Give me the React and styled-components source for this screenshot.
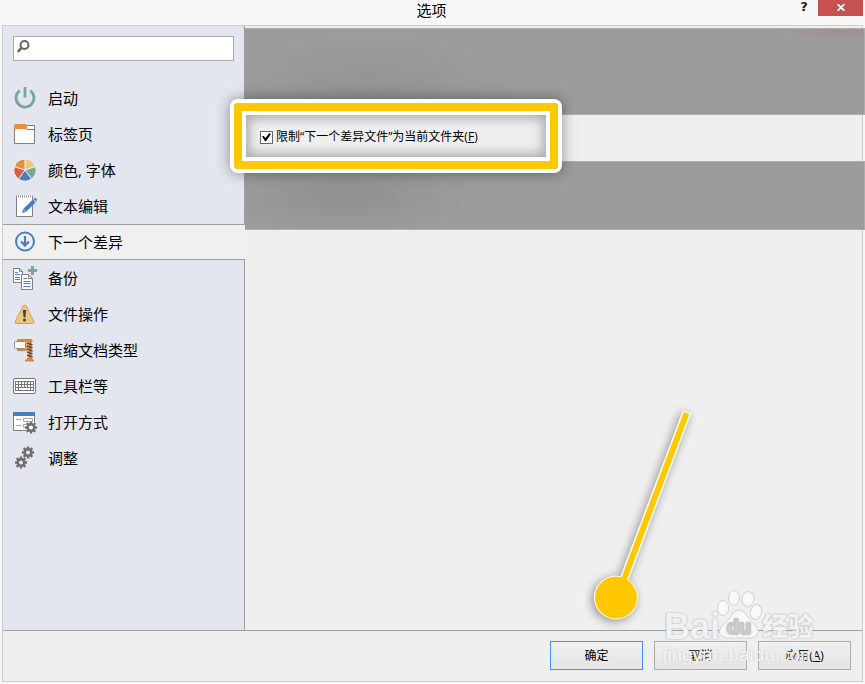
import React, { useState } from 'react';
import styled, { createGlobalStyle } from 'styled-components';

const GlobalStyle = createGlobalStyle`
  * {
    box-sizing: border-box;
  }
  body {
    margin: 0;
    background: #f7f7f7;
    color: #000;
    font-family: "Open Sans", "Noto Sans CJK SC", sans-serif;
    font-size: 15px;
    overflow-x: hidden;
  }
`;

const Dialog = styled.div`
  position: relative;
  display: flex;
  flex-direction: column;
  min-height: 100vh;
`;

const TitleBar = styled.header`
  display: grid;
  grid-template-columns: 1fr auto 1fr;
  height: 25px;
  padding-right: 2px;
`;

const Title = styled.h1`
  grid-column: 2;
  margin: 0;
  font-size: 15px;
  font-weight: 400;
  line-height: 20px;
`;

const WindowButtons = styled.div`
  display: flex;
  justify-content: flex-end;
  align-items: flex-start;
`;

const HelpButton = styled.button`
  width: 28px;
  height: 14px;
  padding: 0;
  border: 0;
  background: none;
  color: #1e1e1e;
  font: bold 13px/14px "DejaVu Sans", sans-serif;
`;

const CloseButton = styled.button`
  display: flex;
  align-items: center;
  justify-content: center;
  width: 45px;
  height: 16px;
  padding: 0 0 2px;
  border: 0;
  background: #c75050;
`;

const Frame = styled.div`
  flex: 1;
  display: flex;
  flex-direction: column;
  margin: 0 2px 2px;
  border: 1px solid #cdcdcd;
  background: #efefef;
`;

const Body = styled.div`
  flex: 1;
  display: flex;
`;

const Sidebar = styled.aside`
  display: flex;
  flex-direction: column;
  width: 242px;
`;

const SearchArea = styled.div`
  height: 54px;
  padding: 10px 10px 0;
  border-right: 1px solid #9e9e9e;
  background: #e3e6ee;
`;

const SearchField = styled.label`
  display: flex;
  height: 25px;
  padding: 3px;
  border: 1px solid #abadb3;
  background: #fff;
`;

const SearchInput = styled.input`
  flex: 1;
  min-width: 0;
  padding: 0 4px;
  border: 0;
  outline: 0;
  background: none;
  font: inherit;
  font-size: 12px;
`;

const Item = styled.button`
  display: flex;
  align-items: center;
  gap: 11px;
  height: 36px;
  padding: 0 10px;
  border: solid #9e9e9e;
  border-width: ${p => (p.$active ? '1px 0' : '0 1px 0 0')};
  background: ${p => (p.$active ? '#f0f0f0' : '#e3e6ee')};
  color: #000;
  font: inherit;
  line-height: 20px;
  text-align: left;
`;

const SidebarRest = styled.div`
  flex: 1;
  border-right: 1px solid #9e9e9e;
  background: #e3e6ee;
`;

const Content = styled.main`
  flex: 1;
  min-width: 0;
  padding-top: 2px;
`;

// greyed out area, runs over the frame up to the window edge
const Masked = styled.div`
  height: ${p => p.$height}px;
  margin-right: -3px;
  border: solid #adadad;
  border-width: 1px 1px 1px 0;
  background: ${p => p.$smudge} #9c9c9c;
`;

const OptionRow = styled.div`
  position: relative;
  display: flex;
  align-items: center;
  height: 46px;
  padding: 0 15px 2px;
`;

const Option = styled.label`
  display: flex;
  align-items: center;
  gap: 3px;
  font-size: 12px;
  line-height: 16px;
  white-space: nowrap;
`;

const CheckBox = styled.input`
  appearance: none;
  display: grid;
  width: 13px;
  height: 13px;
  margin: 0;
  border: 1px solid #666;
  background: #fff;

  &:checked::before {
    content: "";
    margin: 1px;
    background: #000;
    clip-path: polygon(0 42%, 20% 38%, 38% 62%, 82% 6%, 100% 16%, 44% 96%, 34% 96%);
  }
`;

const Highlight = styled.div`
  position: absolute;
  left: -11px;
  top: -12px;
  width: 324px;
  height: 66px;
  border: 8px solid #ffc800;
  border-radius: 4px;
  box-shadow:
    0 0 0 4px #fff,
    0 0 14px 5px rgba(0, 0, 0, 0.35),
    inset 0 0 0 4px #fff,
    inset 0 0 12px 7px rgba(0, 0, 0, 0.3);
  pointer-events: none;
`;

const Footer = styled.footer`
  display: flex;
  justify-content: flex-end;
  gap: 11px;
  height: 51px;
  padding: 10px 11px;
  border-top: 1px solid #9e9e9e;
`;

const PushButton = styled.button`
  width: 93px;
  height: 29px;
  padding: 0;
  border: 1px solid ${p => (p.$default ? '#3399ff' : '#acacac')};
  background: linear-gradient(#f0f0f0, #e4e4e4);
  color: #000;
  font: inherit;
  font-size: 12px;
  line-height: 16px;
`;

const Pin = styled.svg`
  position: absolute;
  right: 165px;
  bottom: 54px;
  pointer-events: none;
  filter: drop-shadow(-2px 2px 5px rgba(0, 0, 0, 0.4));
`;

const Watermark = styled.div`
  position: absolute;
  right: 46px;
  bottom: 19px;
  width: 156px;
  color: rgba(250, 250, 250, 0.9);
  text-shadow: 0 0 2px #b4b4b4, 0 0 1px #b4b4b4;
  pointer-events: none;
`;

const Brand = styled.div`
  display: flex;
  align-items: flex-end;
  padding-left: 1px;
  font: bold 36px/36px "Liberation Sans", sans-serif;
`;

const Paw = styled.svg`
  margin: 0 0 6px -4px;
`;

const BrandCjk = styled.span`
  font: 900 26px/40px "Noto Sans CJK SC", sans-serif;
`;

const Site = styled.div`
  font: 19px/20px "Liberation Sans", sans-serif;
  text-shadow: 0 0 2px #c4c4c4;
`;

const Icon = ({ children }) => (
  <svg width="24" height="24" viewBox="0 0 24 24" fill="none" aria-hidden="true">
    {children}
  </svg>
);

// one cog: eight teeth around a ring
const Cog = ({ x, y }) => (
  <g transform={`translate(${x} ${y})`} stroke="#6e6e6e">
    <circle r="3.3" strokeWidth="2.5" />
    <path
      d="M0-3.6V-6M0 3.6V6M-3.6 0H-6M3.6 0H6M-2.6-2.6L-4.3-4.3M2.6 2.6L4.3 4.3M-2.6 2.6L-4.3 4.3M2.6-2.6L4.3-4.3"
      strokeWidth="2.4"
    />
  </g>
);

const PowerIcon = () => (
  <Icon>
    <path d="M6.8 4.7a9 9 0 1 0 10.4 0M12 1v10.5" stroke="#78a898" strokeWidth="2.8" />
  </Icon>
);

const TabsIcon = () => (
  <Icon>
    <path d="M1.5 6.5V21.5H21.5V3.5H13.5V6.5Z" fill="#fff" stroke="#808080" />
    <path d="M13.5 7.5H21" stroke="#808080" />
    <path d="M1 7V3.5Q1 2 2.5 2H12Q14 2 14 4V7Z" fill="#e88d45" />
  </Icon>
);

const PieIcon = () => (
  <Icon>
    <g stroke="#f2f2f4" strokeWidth="0.9">
      <path d="M12 12V1A11 11 0 0 1 22.46 8.6Z" fill="#eec67c" />
      <path d="M12 12L22.46 8.6A11 11 0 0 1 18.47 20.9Z" fill="#78a898" />
      <path d="M12 12L18.47 20.9A11 11 0 0 1 5.53 20.9Z" fill="#4a80ba" />
      <path d="M12 12L5.53 20.9A11 11 0 0 1 1.54 8.6Z" fill="#d65f42" />
      <path d="M12 12L1.54 8.6A11 11 0 0 1 12 1Z" fill="#e88d45" />
    </g>
  </Icon>
);

const NotepadIcon = () => (
  <Icon>
    <path d="M3.5 3V22.5H19.5V3" fill="#fff" stroke="#808080" />
    <path d="M4 3H19" stroke="#fff" strokeWidth="3" />
    <path d="M3.5 4V1.5M5.500 3.500V1.500M7.500 3.500V1.500M9.500 3.500V1.500M11.500 3.500V1.500M13.500 3.500V1.500M15.500 3.500V1.500M17.500 3.500V1.500M19.500 4V1.500" stroke="#909090" />
    <path d="M9 19L10.4 14.8L19.8 5.4L22.7 8.3L13.3 17.7Z" fill="#4a80ba" />
    <path d="M20.4 4.8L21.3 4Q22 3.4 22.8 4.2L23.6 5Q24.3 5.8 23.6 6.7L23.2 7.6Z" fill="#4a80ba" />
    <path d="M10.6 15.4L12.7 17.5" stroke="#b9cce2" />
  </Icon>
);

const DownIcon = () => (
  <Icon>
    <circle cx="12" cy="11.5" r="9" stroke="#4a80ba" strokeWidth="2" />
    <path d="M12 6V15.500M8 11.500L12 15.600L16 11.500" stroke="#4a80ba" strokeWidth="2.200" />
  </Icon>
);

const BackupIcon = () => (
  <Icon>
    <path d="M0.5 2.5H6.5L9.5 5.5V16.5H0.5Z" fill="#fff" stroke="#808080" />
    <path d="M6.5 2.5V5.5H9.5" stroke="#808080" />
    <path d="M2 6.5H5M2 8.5H7M2 11.5H7M2 13.5H7" stroke="#4a80ba" strokeWidth="1.2" />
    <path d="M8.5 8.5H15.5L19.5 12.5V23.5H8.5Z" fill="#fff" stroke="#808080" />
    <path d="M15.5 8.5V12.5H19.5" stroke="#808080" />
    <path d="M10.5 12.5H14M10.5 15.5H17.5M10.5 17.5H17.5M10.5 20.5H17.5" stroke="#4a80ba" strokeWidth="1.2" />
    <path d="M19.5 0V9M15 4.5H24" stroke="#78a898" strokeWidth="3" />
  </Icon>
);

const WarningIcon = () => (
  <Icon>
    <path
      d="M10 4Q11.500 2 13 4L20.800 19.400Q21.500 21.500 19.500 21.500H3.500Q1.500 21.500 2.200 19.400Z"
      fill="#eec67c"
      stroke="#d69a64"
    />
    <path d="M9.800 8H13.200L12.400 15.500H10.600Z" fill="#444" />
    <circle cx="11.5" cy="18" r="1.5" fill="#444" />
  </Icon>
);

const ClampIcon = () => (
  <Icon>
    <path d="M4 3V2Q4 1 5 1H18Q19.500 1 19.500 2.500V4H4Z" fill="#dc8530" />
    <path d="M4 10H14V13H4Z" fill="#dc8530" />
    <path d="M12 3H15V12H12Z" fill="#eba65a" />
    <rect x="1.5" y="3.5" width="11" height="7" rx="1" fill="#fafafa" stroke="#909090" />
    <path d="M17 4V21" stroke="#c98a3a" strokeWidth="3" />
    <path d="M14 5L19.500 7M14 8L19.500 10M14 11L19.500 13M14 14L19.500 16M14 17L19.500 19" stroke="#5f4a30" strokeWidth="1.400" />
    <path d="M14 20.500H19.500M12 22.500H21" stroke="#e0852c" strokeWidth="1.800" />
  </Icon>
);

const KeyboardIcon = () => (
  <Icon>
    <rect x="0.5" y="4.5" width="22" height="15" rx="1.5" fill="#fff" stroke="#767676" />
    <rect x="2.5" y="7.5" width="18" height="9" fill="#fff" stroke="#767676" />
    <path d="M2.5 10.5H20.5M2.5 13.5H20.5M5.5 7.5V16.5M8.5 7.5V13.5M11.5 7.5V13.5M14.5 7.5V13.5M17.5 7.5V16.5" stroke="#767676" />
  </Icon>
);

const OpenWithIcon = () => (
  <Icon>
    <path d="M0.5 5V20.5H21.5V5" fill="#fff" stroke="#808080" />
    <path d="M0 2H22V6H0Z" fill="#4a80ba" />
    <path d="M3 9.5H8.5M3 15.5H8.5M10.5 8.5H19.5V11.5H10.5ZM18.5 14.5H10.5V17.5H14" stroke="#a5a5a5" />
    <circle cx="18.2" cy="17.5" r="6" fill="#fff" />
    <Cog x={18} y={17.5} />
  </Icon>
);

const CogsIcon = () => (
  <Icon>
    <Cog x={15} y={6.5} />
    <Cog x={8} y={16.5} />
  </Icon>
);

const items = [
  { text: '启动', icon: PowerIcon },
  { text: '标签页', icon: TabsIcon },
  { text: '颜色, 字体', icon: PieIcon },
  { text: '文本编辑', icon: NotepadIcon },
  { text: '下一个差异', icon: DownIcon },
  { text: '备份', icon: BackupIcon },
  { text: '文件操作', icon: WarningIcon },
  { text: '压缩文档类型', icon: ClampIcon },
  { text: '工具栏等', icon: KeyboardIcon },
  { text: '打开方式', icon: OpenWithIcon },
  { text: '调整', icon: CogsIcon },
];

const App = () => {
  const [active, setActive] = useState(4);
  const [limited, setLimited] = useState(true);

  return (
    <Dialog>
      <GlobalStyle />
      <TitleBar>
        <Title>选项</Title>
        <WindowButtons>
          <HelpButton>?</HelpButton>
          <CloseButton aria-label="关闭">
            <svg width="8" height="7" viewBox="0 0 8 7">
              <path d="M0.5 0L7.5 7M7.5 0L0.5 7" stroke="#fff" strokeWidth="1.8" />
            </svg>
          </CloseButton>
        </WindowButtons>
      </TitleBar>

      <Frame>
        <Body>
          <Sidebar>
            <SearchArea>
              <SearchField>
                <svg width="14" height="14" viewBox="0 0 14 14" fill="none">
                  <circle cx="7.5" cy="5" r="4" stroke="#666" strokeWidth="2" />
                  <path d="M4.800 7.700L0.700 11.800" stroke="#666" strokeWidth="2.600" />
                </svg>
                <SearchInput type="text" aria-label="搜索" />
              </SearchField>
            </SearchArea>
            {items.map((item, i) => (
              <Item key={item.text} $active={i === active} onClick={() => setActive(i)}>
                <item.icon />
                {item.text}
              </Item>
            ))}
            <SidebarRest />
          </Sidebar>

          <Content>
            <Masked
              $height={87}
              $smudge="radial-gradient(ellipse 70px 12px at 96% 0, rgba(185, 110, 110, 0.3), transparent), radial-gradient(ellipse 150px 60px at 20% 75%, rgba(125, 125, 125, 0.3), transparent),"
            />
            <OptionRow>
              <Option>
                <CheckBox type="checkbox" checked={limited} onChange={() => setLimited(!limited)} />
                <span>限制“下一个差异文件”为当前文件夹(<u>F</u>)</span>
              </Option>
              <Highlight />
            </OptionRow>
            <Masked
              $height={69}
              $smudge="radial-gradient(ellipse 130px 40px at 16% 50%, rgba(125, 125, 125, 0.4), transparent),"
            />
          </Content>
        </Body>

        <Footer>
          <PushButton $default>确定</PushButton>
          <PushButton>取消</PushButton>
          <PushButton>应用(<u>A</u>)</PushButton>
        </Footer>
      </Frame>

      <Pin width="120" height="230" viewBox="0 0 120 230">
        <path d="M107 12L43 182" stroke="#fff" strokeWidth="9" />
        <circle cx="36" cy="197.5" r="22" fill="#fff" />
        <path d="M106.6 13L43 182" stroke="#ffc800" strokeWidth="6" />
        <circle cx="36" cy="197.5" r="21" fill="#ffc800" />
      </Pin>

      <Watermark aria-hidden="true">
        <Brand>
          Bai
          <Paw width="46" height="50" viewBox="0 0 46 50">
            <g fill="#fafafa" fillOpacity="0.9" stroke="#d2d2d2">
              <ellipse cx="7" cy="19" rx="5.5" ry="7.5" />
              <ellipse cx="18" cy="9" rx="5.5" ry="7.5" />
              <ellipse cx="32" cy="10" rx="6" ry="7.5" transform="rotate(12 32 10)" />
              <ellipse cx="40" cy="23" rx="5.5" ry="7.5" transform="rotate(12 40 23)" />
              <path d="M23 21Q28 21 31 27Q34 32 39 36Q44 41 41 46Q39 49 34 49H12Q6 49 4 45Q2 40 8 35Q12 32 15 27Q18 21 23 21Z" />
            </g>
            <text x="23" y="45" textAnchor="middle" fill="#efefef" stroke="#cacaca" fontSize="20" fontFamily="Liberation Sans" fontWeight="bold">du</text>
          </Paw>
          <BrandCjk>经验</BrandCjk>
        </Brand>
        <Site>jingyan.baidu.com</Site>
      </Watermark>
    </Dialog>
  );
};

export default App;
